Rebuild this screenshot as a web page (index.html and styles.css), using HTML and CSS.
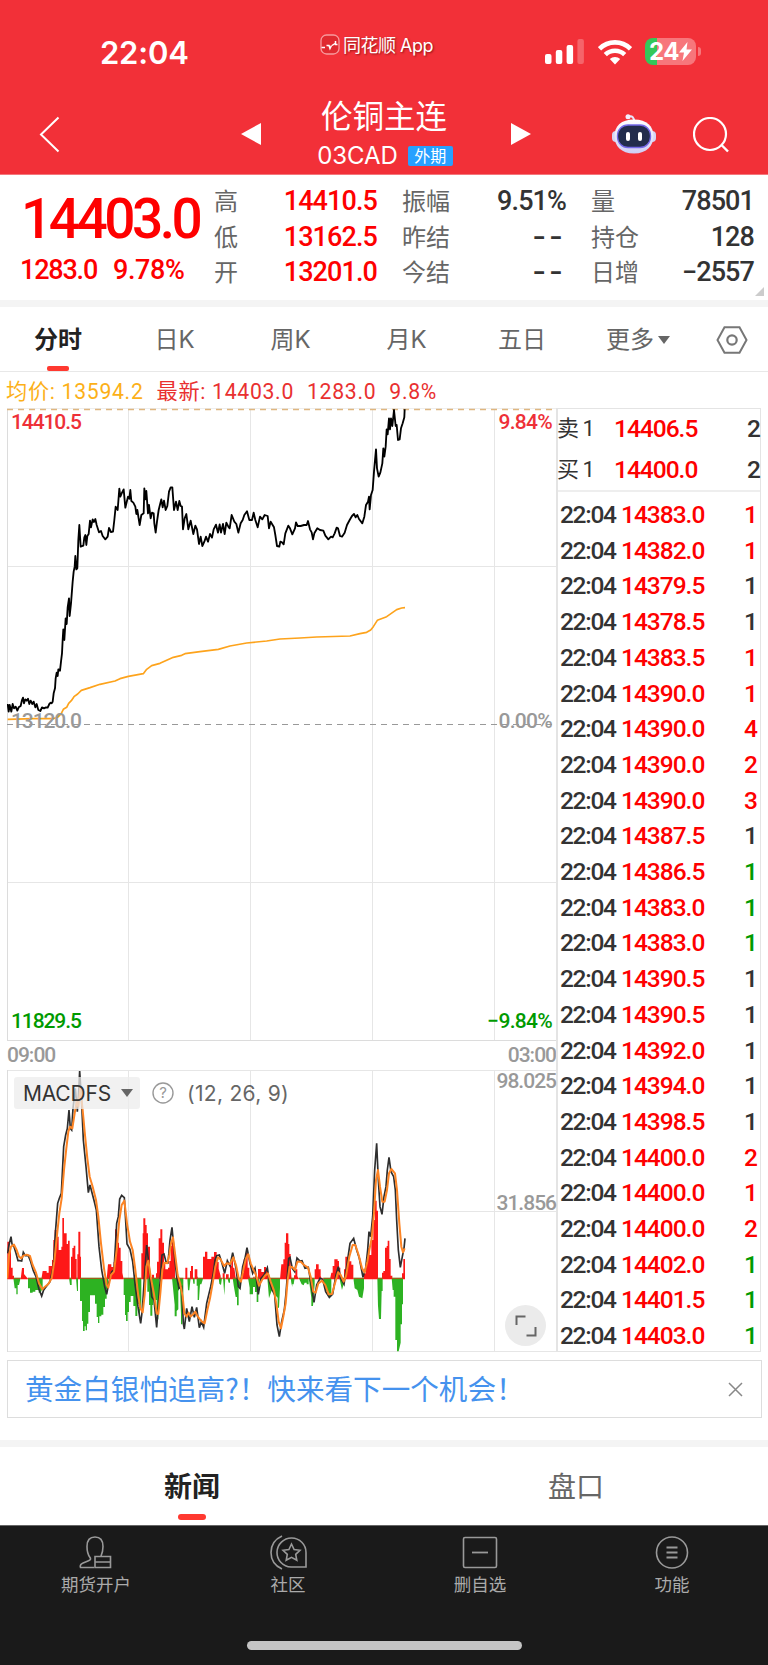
FILE: index.html
```html
<!DOCTYPE html>
<html lang="zh-CN">
<head>
    <meta charset="UTF-8">
    <title>伦铜主连</title>
    <link rel="stylesheet" href="styles.css">
</head>
<body>
<div class="header">
    <div class="status">
        <span class="clock">22:04</span>
        <span class="app">
            <svg width="20" height="21" viewBox="0 0 20 21"><rect x="1" y="1" width="18" height="19" rx="5.5" fill="#e02a30" stroke="#f79a9d" stroke-width="1.3"/><path d="M1.500 13.500h3.500M6.500 11.500h2.500l1 3 1.500-3M12 11.500l3-2M15.500 7v3.500h2" fill="none" stroke="#fff" stroke-width="1.500"/></svg>
            同花顺 App
        </span>
        <span class="signals">
            <svg width="39" height="26" viewBox="0 0 39 26"><g fill="#fff"><rect x="0" y="15" width="6.500" height="10" rx="2"/><rect x="10.800" y="11" width="6.500" height="14" rx="2"/><rect x="21.600" y="6" width="6.500" height="19" rx="2"/><rect x="32.400" y="0" width="6.500" height="25" rx="2" opacity=".25"/></g></svg>
            <svg width="34" height="26" viewBox="0 0 34 26"><g fill="none" stroke="#fff" stroke-width="4.600"><path d="M1.500 9.800a22 22 0 0 1 31 0"/><path d="M7.300 15.700a14 14 0 0 1 19.400 0"/></g><path d="M17 25.500l-5.200-5.400a7.600 7.600 0 0 1 10.400 0z" fill="#fff"/></svg>
            <span class="battery"><b>24</b><svg width="13" height="19" viewBox="0 0 13 19"><path d="M8.500 0L0 10.500h5L3.500 19 13 7.500H7.500z" fill="#fff"/></svg></span>
            <i class="battery-cap"></i>
        </span>
    </div>
    <div class="nav">
        <svg class="back" width="21" height="37" viewBox="0 0 21 37"><path d="M19.500 1.500L2 18.500l17.500 17" fill="none" stroke="#fff" stroke-width="2"/></svg>
        <svg class="prev" width="20" height="22" viewBox="0 0 20 22"><path d="M20 0v22L0 11z" fill="#fff"/></svg>
        <div class="title">
            <div class="name">伦铜主连</div>
            <div class="code">03CAD <span class="badge">外期</span></div>
        </div>
        <svg class="next" width="20" height="22" viewBox="0 0 20 22"><path d="M0 0v22l20-11z" fill="#fff"/></svg>
        <svg class="robot" width="44" height="40" viewBox="0 0 44 40">
            <defs><linearGradient id="shell" x1="0" y1="0" x2="0" y2="1"><stop offset="0" stop-color="#fff"/><stop offset="1" stop-color="#cfcdf5"/></linearGradient></defs>
            <path d="M17 2.500q5-1 5 5" fill="none" stroke="#e6e4fa" stroke-width="2"/><circle cx="16" cy="2.800" r="2.500" fill="#f3efff"/>
            <rect x="0" y="17" width="8" height="11" rx="4" fill="#d5d5f6"/><rect x="36" y="17" width="8" height="11" rx="4" fill="#d5d5f6"/>
            <path d="M22 5.500c13 0 19.500 7 19.500 16.500S35 39.500 22 39.500 2.500 32 2.500 22 9 5.500 22 5.500z" fill="url(#shell)"/>
            <rect x="5.500" y="11" width="33" height="22.500" rx="10.500" fill="#222c4c" stroke="#7468e8" stroke-width="1.300"/>
            <rect x="14" y="18" width="4" height="9" rx="2" fill="#fff"/><rect x="26" y="18" width="4" height="9" rx="2" fill="#fff"/>
        </svg>
        <svg class="search" width="36" height="36" viewBox="0 0 36 36"><circle cx="17" cy="17" r="16" fill="none" stroke="#fff" stroke-width="2.200"/><path d="M28 27.500l7 7" stroke="#fff" stroke-width="2.400"/></svg>
    </div>
</div>

<div class="summary">
    <div class="last">
        <div class="price">14403.0</div>
        <div class="change"><span>1283.0</span><span class="rate">9.78%</span></div>
    </div>
    <dl class="stats">
        <dt>高</dt><dd class="up">14410.5</dd><dt>振幅</dt><dd>9.51%</dd><dt>量</dt><dd>78501</dd>
        <dt>低</dt><dd class="up">13162.5</dd><dt>昨结</dt><dd class="none">--</dd><dt>持仓</dt><dd>128</dd>
        <dt>开</dt><dd class="up">13201.0</dd><dt>今结</dt><dd class="none">--</dd><dt>日增</dt><dd>−2557</dd>
    </dl>
    <i class="corner"></i>
</div>

<ul class="tabs">
    <li class="select">分时</li>
    <li>日K</li>
    <li>周K</li>
    <li>月K</li>
    <li>五日</li>
    <li>更多<i class="down"></i></li>
    <li><svg width="32" height="28" viewBox="0 0 32 28"><path d="M8.500 1.200h15L30.500 14l-7 12.800h-15L1.500 14z" fill="none" stroke="#777" stroke-width="2"/><circle cx="16" cy="14" r="4.700" fill="none" stroke="#777" stroke-width="2.200"/></svg></li>
</ul>

<div class="legend">
    <span class="avg">均价: 13594.2</span>
    <span>最新: 14403.0</span>
    <span>1283.0</span>
    <span>9.8%</span>
</div>

<div class="quote">
    <div class="charts">
        <div class="chart-price">
            <svg width="549" height="633" viewBox="7 0 549 633">
                <g fill="none" stroke="#e6e6e6">
                    <path d="M7 158.500H556M7 474.500H556M128.500 0V633M250.500 0V633M372.500 0V633M494.500 0V633"/>
                    <path d="M7.500 0V633M7 632.500H556" stroke="#dcdcdc"/>
                    <path d="M7 .5H556" stroke="#eee"/>
                </g>
                <path d="M7 1.500H556" stroke="#dfb680" stroke-width="1.300" stroke-dasharray="6 5" fill="none"/>
                <path d="M7 316.500H556" stroke="#999" stroke-dasharray="6 5" fill="none"/>
                <g transform="translate(0 -8) scale(.33333)" fill="none" stroke-linejoin="round">
                    <polyline stroke="#fda31c" stroke-width="5" points="23,958 100,956 160,956 175,950 184,940 190,928 200,922 206,910 214,902 222,890 233,882 244,871 270,863 300,853 345,843 360,836 385,829 430,821 440,808 455,797 480,790 520,772 545,766 555,761 600,755 655,748 690,738 740,729 800,723 840,717 900,714 950,711 1050,708 1080,701 1100,697 1112,690 1120,680 1132,661 1160,650 1190,629 1205,624 1215,623"/>
                    <polyline stroke="#000" stroke-width="5.500" points="23,912 26,935 29,915 34,935 38,912 42,925 47,920 52,932 56,922 62,918 66,900 69,893 72,910 76,898 80,902 84,896 88,912 92,902 97,912 101,905 106,922 110,912 115,930 121,933 126,922 132,925 138,922 143,923 148,912 152,908 155,910 158,905 161,880 165,865 167,835 170,818 173,828 175,808 180,812 183,785 186,760 188,720 190,688 193,720 197,655 200,672 203,622 207,595 209,648 213,610 218,545 221,515 224,500 226,468 229,508 232,505 235,420 238,375 242,440 250,437 253,412 256,405 259,435 262,408 266,402 270,362 273,382 278,358 282,366 286,357 290,375 297,397 303,393 308,408 316,418 323,410 327,384 333,396 339,395 343,360 347,320 353,330 358,266 361,290 366,278 371,268 376,323 381,302 384,290 388,296 391,270 394,303 400,308 406,320 409,342 412,330 419,375 424,345 431,340 433,265 436,298 439,273 444,340 447,315 452,355 456,338 461,340 463,370 467,398 471,365 476,330 484,298 488,322 492,302 497,330 502,318 507,275 512,262 517,262 522,330 528,305 533,330 538,303 542,318 546,320 549,388 554,355 559,342 565,388 572,362 580,402 586,377 591,388 597,432 602,410 607,438 613,425 618,410 624,425 630,402 636,413 641,388 648,374 654,398 659,373 663,398 669,372 674,402 679,368 685,380 689,385 695,345 703,365 709,372 715,398 722,370 728,360 733,345 741,334 748,360 756,360 761,338 766,360 773,382 780,350 787,358 794,345 803,348 807,385 812,365 822,382 826,405 831,438 838,440 841,425 846,427 851,433 856,400 865,377 870,385 877,403 885,385 888,367 893,378 902,378 912,375 920,375 924,363 930,388 935,397 939,418 943,400 952,385 960,390 970,392 976,407 985,418 993,410 998,412 1004,400 1010,383 1014,385 1020,408 1026,410 1034,398 1041,375 1049,360 1056,348 1062,342 1067,352 1072,345 1077,357 1087,370 1093,350 1098,315 1104,305 1107,290 1109,328 1113,285 1118,270 1122,215 1128,148 1131,205 1136,230 1141,218 1147,190 1150,145 1153,170 1157,140 1160,88 1163,103 1167,55 1170,88 1173,55 1177,78 1182,30 1187,78 1190,75 1194,120 1199,118 1203,85 1208,70 1213,52 1214,28"/>
                </g>
            </svg>
            <div class="axis">
                <p class="max"><span>14410.5</span><span>9.84%</span></p>
                <p class="mid"><span>13120.0</span><span>0.00%</span></p>
                <p class="min"><span>11829.5</span><span>−9.84%</span></p>
            </div>
        </div>
        <div class="hours"><span>09:00</span><span>03:00</span></div>
        <div class="chart-macd">
            <svg width="549" height="282" viewBox="7 0 549 282">
                <g fill="none" stroke="#e6e6e6">
                    <path d="M7 .5H556M7 141.500H556M7 281.500H556M128.500 0V282M250.500 0V282M372.500 0V282M494.500 0V282"/>
                    <path d="M7.500 0V282" stroke="#dcdcdc"/>
                </g>
                <g transform="translate(0 -50) scale(.33333)">
                    <path fill="#fe1818" d="M22 778V665h6v28h5v50h5v24h4v11zM62 778l4-34h6v18l8 10 4 6zM124 778L128 753H140V758H146V738H156V720H160V660H164V630H170V650H176V690H184V680H187V594H192V640H200V672H204V662H209V778zM213 778v-68h4v-26h4v-7h5v40h4v61zM232 778v-75h3v-68h6v75h2v68zM320 778l4-45h10v8h7v-15h4v-98h6v40h6v15h5v40h5v35l4 20zM424 778v-78h4v-60h2v-45h6v20h4v25h4v40h6v98zM456 778v-14h6v14zM468 778v-18h3v-35h5v-70h5v-27h6v40h5v60h4v20h8v-5h4v-20h4v-45h4v-20h6v50h3v70zM556 778v-35h6v35zM570 778v-25h3v-15h6v40zM584 778v-30h8v20l3 10zM609 778v-68h6v-15h7v22h12v-7h8v-14h8v30h6v20l6 22v10zM668 778v-18h6v18zM678 778v-15h8v15zM690 778v-40h4v-20h5v25h4l4 30v5zM724 778l3-20h4v-40h6v-20h6v45h5v20l3 15zM760 778v-8h4v8zM774 778v-31h10v9h8v-15h6v10h6v27zM840 778l4-45h6v-15h4v-50h4v-28h7v32h3v30h4v40l3 36zM882 778v-12h4v-18h6v20l4 10zM944 778v-30h4v-15h8v15h6v20l4 10zM990 778l4-20h4v-20h5v-20h10v5h4v20h4v35zM1032 778v-30h4v-38h10v14h8v10h6v44zM1092 778v-18h6v-40h5v-35h5v20h6v-45h6v-60h5v-58h5v30h4v206zM1146 778v-20h4v-5h5v-70h5v-5h3v-16h5v55h4v50h5v11zM1206 778v-18h4v-43h5v61z"/>
                    <path fill="#2db222" d="M40 773h22l-5 22h-4v28h-4v-18h-5zM84 773h44v30l-6 15h-6v-8h-10v5h-8v3h-8v-13h-6zM207 773h8v22h-5zM228 773h6v40h-3zM240 773h84v35h-4v28h-5v25h-5v23h-6v5h-6v20h-4v-18h-4v-40h-5v-25h-15v50h-5v35h-4v20h-4v-12h-3v14h-5v-30h-3v-60h-6zM371 773h53v90h-4v25h-3v-35h-5v35h-6v-30h-6v-30h-8v18h-5v30h-4v27h-5v-18h-3v-60h-4zM442 773h36v95h-3v30h-5v-58h-10v15h-3v32h-6v-32h-4v-40h-5zM516 773h34v70h-3v70h-4v-30l-3-80-5 10v55l-5 5v16h-6v-35zM562 773h10l-4 38h-4zM578 773h6v18h-4zM590 773h20l-6 20h-4l-3 47h-4v-43h-3zM656 773h10l-3 22-5-4zM669 773h7l-3 53zM682 773h8v15h-4zM698 773h22v25h-4v58h-5v-25h-4l-6-35zM744 773h34v30h-3v43h-5v-30h-5v-15h-6v22h-10v-20zM802 773h38v30l-3 60h-4v-30l-8-8-6-20-6 12-6 18zM872 773h12l-3 20h-4v8l-3-12zM896 773h30v20h-6v-5h-6l-3 8-6-3zM926 773h18v20l-5 65h-5v-25zM970 773h24v50l-6 12-8-20-8-18zM1018 773h14v15l-6 22zM1060 773h32v32l-5 30-10-5-5-20-8-5zM1132 773h16v40h-3l-2 84h-6l-3-40zM1175 773h34v80h-3v60h-4v55l-6 26h-5v-34h-5v-130h-5v-20h-3z"/>
                    <path stroke="#fe1818" stroke-width="2" d="M22 775H1215"/>
                    <polyline fill="none" stroke="#2e2e2e" stroke-width="5" points="23,700 27,675 33,650 36,672 42,680 48,700 54,722 60,722 65,723 70,697 76,707 85,707 92,725 100,752 108,770 117,808 125,828 131,810 140,798 150,785 160,740 166,640 173,550 178,535 184,520 191,380 197,345 202,325 207,270 211,325 215,330 219,265 226,205 232,275 236,215 239,153 244,230 250,360 258,440 265,518 270,495 277,522 283,545 289,570 297,680 305,750 314,800 320,823 326,790 335,755 342,750 350,610 355,590 359,537 365,526 373,533 381,672 390,688 398,725 406,800 414,860 422,910 427,870 434,760 440,675 447,735 455,830 462,840 470,922 477,830 486,705 492,702 498,725 504,728 510,660 516,622 522,690 530,770 537,805 545,800 550,910 553,927 560,865 568,905 576,860 583,892 590,862 598,923 604,905 611,922 620,850 632,800 640,760 645,720 650,707 658,705 666,730 674,760 682,722 690,738 698,698 708,745 715,800 720,805 728,740 735,715 741,683 750,730 758,760 765,745 775,823 783,775 792,765 802,743 808,785 816,808 824,825 831,915 838,950 845,905 853,870 858,820 866,715 870,712 877,745 884,755 891,714 900,723 906,722 915,745 925,742 933,790 942,847 950,795 960,775 968,778 977,815 988,832 998,822 1008,765 1015,740 1022,775 1032,793 1040,740 1050,670 1061,655 1070,690 1078,715 1089,772 1097,745 1103,690 1107,635 1112,650 1118,590 1124,450 1130,370 1135,480 1140,560 1146,583 1152,530 1158,500 1162,450 1167,412 1173,455 1181,470 1186,510 1190,600 1195,690 1201,742 1207,710 1212,685 1215,655"/>
                    <polyline fill="none" stroke="#fd8424" stroke-width="6" stroke-linejoin="round" points="22,775 27,705 33,680 42,674 50,690 57,710 64,715 70,707 80,704 90,708 98,735 108,758 117,790 127,808 135,800 145,792 155,775 163,725 170,655 178,580 185,535 192,450 199,385 205,335 210,320 217,325 224,280 230,245 235,260 241,205 248,270 255,345 262,415 269,470 278,500 288,540 295,590 303,670 312,745 320,795 325,803 333,765 342,755 350,690 358,600 365,555 373,542 381,610 390,665 398,690 406,750 414,820 421,865 428,877 434,825 439,740 445,722 452,770 462,822 470,880 475,882 481,820 487,750 492,728 502,730 508,705 513,670 519,652 525,700 533,765 541,793 548,830 553,880 560,890 566,878 572,890 580,882 586,875 592,888 600,898 606,905 614,910 622,870 630,835 638,790 646,740 654,712 662,718 672,738 680,730 690,732 700,712 708,735 716,775 723,785 731,745 738,715 745,703 752,730 760,748 768,765 777,797 786,780 796,766 804,760 812,785 822,812 829,850 836,905 843,925 850,890 857,850 863,780 869,740 878,742 885,750 892,725 902,725 912,735 924,743 932,770 940,815 947,818 955,790 966,782 976,795 986,823 996,822 1005,790 1014,757 1022,765 1031,785 1038,768 1048,710 1058,675 1066,675 1076,705 1086,745 1094,757 1102,725 1108,690 1115,655 1122,580 1128,480 1134,450 1140,500 1147,545 1154,545 1161,510 1167,460 1174,447 1185,460 1191,510 1198,610 1204,680 1209,697 1214,685"/>
                </g>
            </svg>
            <div class="macd-bar">
                <span class="pick">MACDFS<i class="down"></i></span>
                <svg width="22" height="22" viewBox="0 0 22 22"><circle cx="11" cy="11" r="10" fill="none" stroke="#999" stroke-width="1.400"/><text class="q" x="11" y="16" text-anchor="middle">?</text></svg>
                <span class="params">(12, 26, 9)</span>
            </div>
            <p class="scale top">98.025</p>
            <p class="scale half">31.856</p>
            <span class="expand"><svg width="22" height="22" viewBox="0 0 22 22"><path d="M1.500 10V1.500H10.500M20.500 12v8.500H11.500" fill="none" stroke="#666" stroke-width="2"/></svg></span>
        </div>
    </div>
    <div class="tape">
        <ul class="book">
            <li><span>卖 1</span><b>14406.5</b><em>2</em></li>
            <li><span>买 1</span><b>14400.0</b><em>2</em></li>
        </ul>
        <ul class="ticks">
            <li><span>22:04</span><b>14383.0</b><em class="up">1</em></li>
            <li><span>22:04</span><b>14382.0</b><em class="up">1</em></li>
            <li><span>22:04</span><b>14379.5</b><em>1</em></li>
            <li><span>22:04</span><b>14378.5</b><em>1</em></li>
            <li><span>22:04</span><b>14383.5</b><em class="up">1</em></li>
            <li><span>22:04</span><b>14390.0</b><em class="up">1</em></li>
            <li><span>22:04</span><b>14390.0</b><em class="up">4</em></li>
            <li><span>22:04</span><b>14390.0</b><em class="up">2</em></li>
            <li><span>22:04</span><b>14390.0</b><em class="up">3</em></li>
            <li><span>22:04</span><b>14387.5</b><em>1</em></li>
            <li><span>22:04</span><b>14386.5</b><em class="dn">1</em></li>
            <li><span>22:04</span><b>14383.0</b><em class="dn">1</em></li>
            <li><span>22:04</span><b>14383.0</b><em class="dn">1</em></li>
            <li><span>22:04</span><b>14390.5</b><em>1</em></li>
            <li><span>22:04</span><b>14390.5</b><em>1</em></li>
            <li><span>22:04</span><b>14392.0</b><em>1</em></li>
            <li><span>22:04</span><b>14394.0</b><em>1</em></li>
            <li><span>22:04</span><b>14398.5</b><em>1</em></li>
            <li><span>22:04</span><b>14400.0</b><em class="up">2</em></li>
            <li><span>22:04</span><b>14400.0</b><em class="up">1</em></li>
            <li><span>22:04</span><b>14400.0</b><em class="up">2</em></li>
            <li><span>22:04</span><b>14402.0</b><em class="dn">1</em></li>
            <li><span>22:04</span><b>14401.5</b><em class="dn">1</em></li>
            <li><span>22:04</span><b>14403.0</b><em class="dn">1</em></li>
        </ul>
    </div>
</div>

<div class="notice">
    <span>黄金白银怕追高?！快来看下一个机会！</span>
    <svg width="15" height="15" viewBox="0 0 15 15"><path d="M1 1l13 13M14 1L1 14" stroke="#888" stroke-width="1.500"/></svg>
</div>

<ul class="sections">
    <li class="select">新闻</li>
    <li>盘口</li>
</ul>

<div class="footer">
    <ul class="menu">
        <li>
            <svg width="34" height="34" viewBox="0 0 34 34"><path d="M15 32H1.500q-1-3 2-4.200l6-2.600q3-1.200 1.500-3.200Q8 18 8 11 8 1.500 16 1.500T24 11q0 5-2 9.500M16 21h15.500v11H16zM16 26.500h15.500" fill="none" stroke="#999" stroke-width="1.600"/></svg>
            期货开户
        </li>
        <li>
            <svg width="37" height="35" viewBox="0 0 37 35"><g fill="none" stroke="#999" stroke-width="1.600"><path d="M12 1Q1 6 1 17.500T12 34M36 32H21A14.500 14.500 0 1 1 36 17.500z"/><path d="M21.500 9l2.600 5.500 5.900.8-4.300 4.100 1.100 5.900-5.300-2.900-5.300 2.900 1.100-5.900-4.300-4.100 5.900-.8z"/></g></svg>
            社区
        </li>
        <li>
            <svg width="36" height="34" viewBox="0 0 36 34"><rect x="1.500" y="2" width="33" height="30" rx="1.500" fill="none" stroke="#999" stroke-width="1.600"/><path d="M10 17h16" stroke="#999" stroke-width="1.800"/></svg>
            删自选
        </li>
        <li>
            <svg width="34" height="34" viewBox="0 0 34 34"><circle cx="17" cy="17" r="15.500" fill="none" stroke="#999" stroke-width="1.600"/><path d="M11.500 12h11M11.500 17h11M11.500 22h11" stroke="#999" stroke-width="1.800"/></svg>
            功能
        </li>
    </ul>
    <i class="home"></i>
</div>
</body>
</html>
```
FILE: styles.css
```css
*{
    margin: 0;
    padding: 0;
    box-sizing: border-box;
}
ul{
    list-style: none;
}
i, em{
    font-style: normal;
}
svg{
    display: block;
    flex: none;
}
body{
    width: 768px;
    background: #fff;
    color: #333;
    font-family: Roboto, "Noto Sans CJK SC", sans-serif;
    white-space: nowrap;
}
.up{
    color: #fe0000;
}
.dn{
    color: #009a00;
}

/* header */
.header{
    height: 175px;
    background: #f23038;
    border-bottom: 1px solid #f4777c;
    color: #fff;
}
.status{
    display: grid;
    grid-template-columns: 220px 225px 1fr;
    height: 80px;
    padding-left: 100px;
}
.clock{
    font: 600 31px/105px Inter, sans-serif;
    letter-spacing: -0.2px;
}
.app{
    display: flex;
    align-items: center;
    gap: 3px;
    height: 88px;
    font-size: 18px;
    letter-spacing: -0.5px;
    text-shadow: 1px 1px 2px rgba(90, 0, 0, .6);
    font-family: Inter, "Noto Sans CJK SC", sans-serif;
}
.signals{
    display: flex;
    align-items: center;
    height: 103px;
}
.signals svg + svg{
    margin: 0 13px 0 14px;
}
.battery{
    display: flex;
    align-items: center;
    justify-content: center;
    width: 51px;
    height: 27px;
    border-radius: 8px;
    background: linear-gradient(90deg, #34c759 12px, #f7767b 12px);
}
.battery b{
    font: 700 24px/27px Inter, sans-serif;
    letter-spacing: -0.5px;
}
.battery-cap{
    width: 3px;
    height: 9px;
    margin-left: 2px;
    border-radius: 0 4px 4px 0;
    background: #f7767b;
}
.nav{
    display: flex;
    padding-left: 39px;
}
.back{
    margin-top: 36px;
}
.prev{
    margin: 43px 0 0 181px;
}
.title{
    width: 250px;
    text-align: center;
}
.name{
    margin: 14px 4px 0 0;
    font: 31.5px/40px "Noto Sans CJK SC", sans-serif;
}
.code{
    display: flex;
    align-items: center;
    justify-content: center;
    gap: 10px;
    height: 40px;
    margin-right: 2px;
    padding-top: 3px;
    font: 400 24px/36px Inter, sans-serif;
    letter-spacing: -0.1px;
}
.badge{
    width: 45px;
    height: 20px;
    border-radius: 2px;
    background: #27a0ff;
    font: 16px/19px "Noto Sans CJK SC", sans-serif;
}
.next{
    margin-top: 43px;
}
.robot{
    margin: 34px 0 0 81px;
}
.search{
    margin: 37px 0 0 37px;
}

/* summary */
.summary{
    display: grid;
    grid-template-columns: 214px 1fr;
    position: relative;
    height: 132px;
    border-bottom: 7px solid #f4f4f4;
}
.last{
    color: #fe0000;
    font-weight: 500;
}
.price{
    height: 64px;
    padding: 9px 0 0 21px;
    font-size: 55px;
    line-height: 70px;
    letter-spacing: -3.5px;
}
.change{
    display: flex;
    gap: 16px;
    padding-left: 20px;
    font-size: 27px;
    line-height: 62px;
    letter-spacing: -1.2px;
}
.rate{
    letter-spacing: -0.4px;
}
.stats{
    display: grid;
    grid-template-columns: 56px 107px 78px 111px 68px 120px;
    grid-template-rows: repeat(3, 35.5px);
    padding-top: 9px;
    line-height: 37px;
}
.stats dt{
    color: #666;
    font-size: 24px;
}
.stats dt:nth-of-type(3n+2), .stats dt:nth-of-type(3n){
    padding-left: 25px;
}
.stats dd{
    text-align: right;
    font-size: 27px;
    font-weight: 500;
    letter-spacing: -0.9px;
    line-height: 35px;
}
.stats dd.none{
    font-family: Inter, sans-serif;
    font-size: 30px;
    letter-spacing: 3px;
    line-height: 32px;
}
.corner{
    position: absolute;
    right: 4px;
    bottom: 4px;
    border: solid transparent;
    border-width: 0 0 9px 9px;
    border-bottom-color: #ccc;
}

/* period tabs */
.tabs{
    display: grid;
    grid-template-columns: 116px 117px 115px 117px 114px 118px 69px;
    height: 65px;
    border-bottom: 1px solid #e8e8e8;
    color: #666;
    font: 24px/66px Inter, "Noto Sans CJK SC", sans-serif;
}
.tabs li{
    display: flex;
    align-items: center;
    justify-content: center;
    position: relative;
    height: 64px;
    padding-top: 1px;
}
.select{
    position: relative;
    color: #222;
    font-weight: 700;
}
.select::after{
    content: "";
    position: absolute;
    left: 50%;
    bottom: 0;
    width: 22px;
    height: 5px;
    margin-left: -11px;
    border-radius: 2px;
    background: #ff3930;
}
.down{
    margin-left: 4px;
    border: solid transparent;
    border-width: 8px 6px 0;
    border-top-color: #666;
}

.legend{
    display: flex;
    gap: 13px;
    height: 36px;
    padding-left: 6px;
    color: #e93030;
    font-size: 21.2px;
    line-height: 39px;
    letter-spacing: 0.7px;
}
.avg{
    color: #fcb018;
}

/* charts */
.quote{
    display: grid;
    grid-template-columns: 549px 205px;
    margin-left: 7px;
    height: 945px;
}
.chart-price, .chart-macd{
    position: relative;
}
.axis{
    position: absolute;
    top: 0;
    left: 0;
    width: 549px;
    height: 633px;
    font-size: 21px;
    font-weight: 500;
    letter-spacing: -1.1px;
}
.axis p{
    display: flex;
    justify-content: space-between;
    position: absolute;
    left: 4px;
    right: 4px;
    line-height: 26px;
}
.axis span + span{
    letter-spacing: -0.7px;
}
.axis .max{
    top: 1px;
    color: #ee3038;
}
.axis .mid{
    top: 300px;
    color: #999;
}
.axis .min{
    bottom: 7px;
    color: #009a00;
}
.hours{
    display: flex;
    justify-content: space-between;
    height: 29px;
    color: #999;
    font-size: 21px;
    font-weight: 500;
    line-height: 28px;
    letter-spacing: -1px;
}
.macd-bar{
    display: flex;
    align-items: center;
    gap: 12px;
    position: absolute;
    top: 7px;
    left: 7px;
    color: #666;
    font-family: Inter, sans-serif;
}
.pick{
    display: flex;
    align-items: center;
    width: 126px;
    height: 32px;
    padding-left: 9px;
    border-radius: 3px;
    background: rgba(236, 236, 236, .75);
    color: #333;
    font-size: 21px;
    letter-spacing: -0.2px;
}
.pick .down{
    margin-left: 10px;
}
.q{
    fill: #999;
    font: 15px Inter, sans-serif;
}
.params{
    margin-left: 1px;
    font-size: 21px;
    letter-spacing: 0.3px;
}
.scale{
    position: absolute;
    right: 0;
    color: #999;
    font-size: 21px;
    font-weight: 500;
    line-height: 24px;
    letter-spacing: -1px;
}
.top{
    top: -1px;
}
.half{
    top: 121px;
}
.expand{
    display: flex;
    align-items: center;
    justify-content: center;
    position: absolute;
    right: 10px;
    bottom: 6px;
    width: 41px;
    height: 41px;
    border-radius: 50%;
    background: #ebebeb;
}
.tape{
    height: 944px;
    border: solid #e4e4e4;
    border-width: 1px 1px 1px 2px;
    font-size: 24.5px;
    letter-spacing: -1px;
}
.tape li{
    display: grid;
}
.tape b{
    color: #fe0000;
    font-weight: 500;
}
.tape em{
    text-align: right;
    font-weight: 500;
}
.book{
    height: 83px;
    border-bottom: 2px solid #eee;
}
.book li{
    grid-template-columns: 56px 1fr 40px;
    height: 41px;
    line-height: 40px;
}
.book span{
    margin-left: -1px;
    font-size: 22px;
}
.ticks{
    padding-top: 5px;
}
.ticks li{
    grid-template-columns: 61px 1fr 40px;
    height: 35.71px;
    padding: 0 3px 0 2px;
    line-height: 36px;
}
.ticks span{
    font-weight: 500;
    letter-spacing: -1.3px;
}

.notice{
    display: flex;
    align-items: center;
    justify-content: space-between;
    width: 755px;
    height: 58px;
    margin: 7px 0 0 7px;
    padding: 0 18px 0 17px;
    border: 1px solid #ddd;
    color: #4592ee;
    font: 28.6px/54px "Noto Sans CJK SC", sans-serif;
}
.notice span{
    height: 56px;
}

.sections{
    display: grid;
    grid-template-columns: 1fr 1fr;
    height: 85px;
    margin-top: 22px;
    border-top: 7px solid #f4f4f4;
    color: #666;
    font: 28px/77px "Noto Sans CJK SC", sans-serif;
    text-align: center;
}
.sections .select::after{
    bottom: 5px;
    width: 28px;
    height: 6px;
    margin-left: -14px;
    border-radius: 3px;
}

/* bottom bar */
.footer{
    height: 140px;
    border-top: 1px solid #666;
    background: #1a1a1a;
}
.menu{
    display: grid;
    grid-template-columns: repeat(4, 1fr);
    height: 115px;
    padding-top: 9px;
    color: #aaa;
    font: 17.5px/28px "Noto Sans CJK SC", sans-serif;
    text-align: center;
}
.menu svg{
    height: 35px;
    margin: 0 auto;
}
.home{
    display: block;
    width: 275px;
    height: 9px;
    margin: 0 auto;
    border-radius: 5px;
    background: #c5c5c5;
}
```
